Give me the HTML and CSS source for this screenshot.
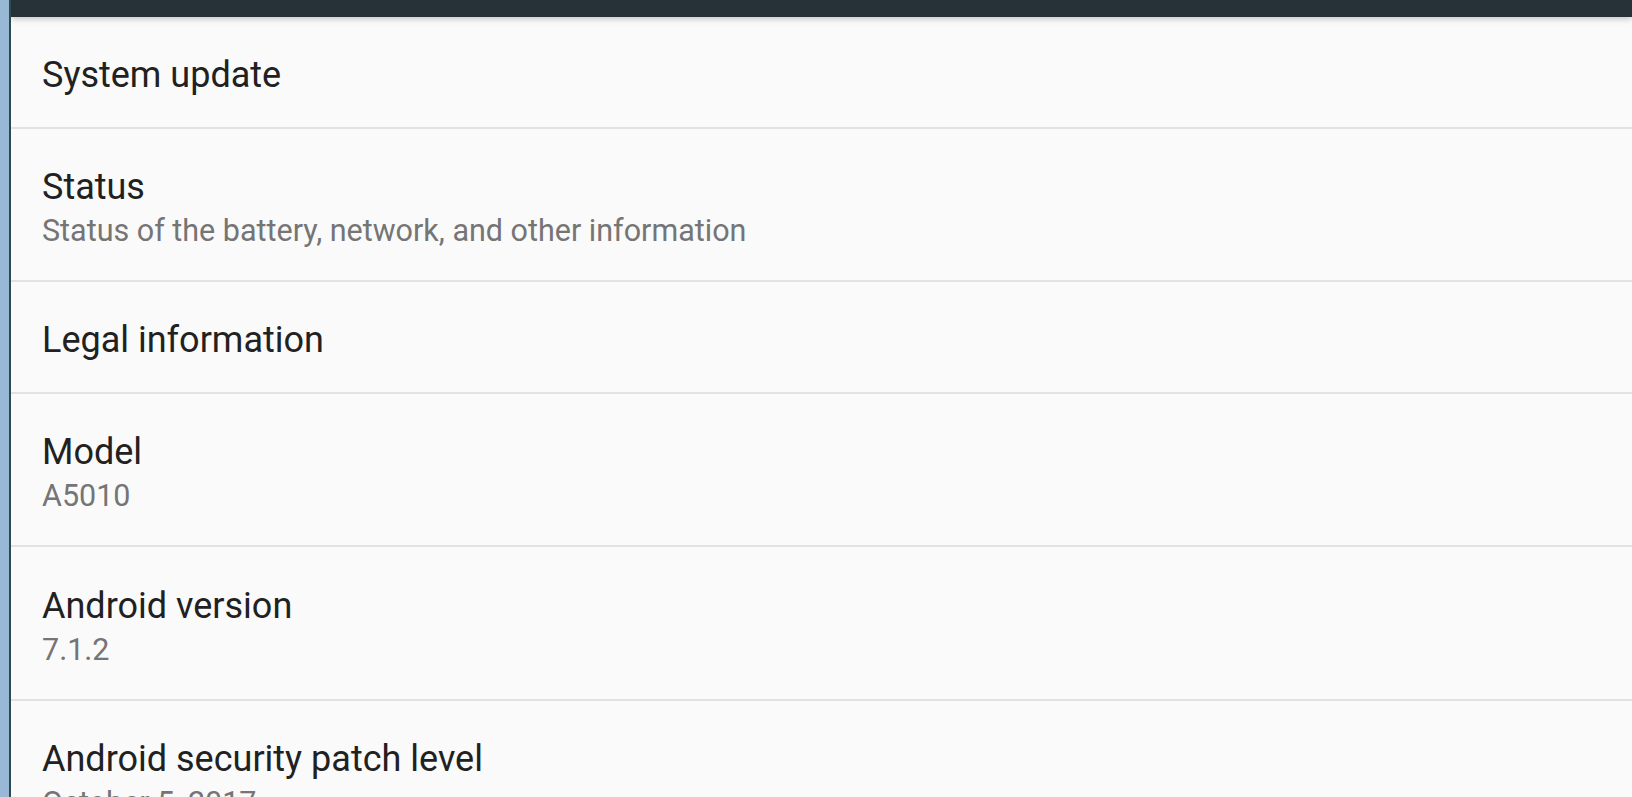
FILE: index.html
```html
<!DOCTYPE html>
<html lang="en">
<head>
<meta charset="utf-8">
<title>About phone</title>
<link rel="stylesheet" href="styles.css">
</head>
<body>
<div class="frame">
  <div class="edge"></div>
  <div class="screen">
    <div class="appbar"></div>
    <div class="list">
      <div class="pref single"><div class="title">System update</div></div>
      <div class="pref double"><div class="title">Status</div><div class="summary">Status of the battery, network, and other information</div></div>
      <div class="pref single"><div class="title">Legal information</div></div>
      <div class="pref double"><div class="title">Model</div><div class="summary">A5010</div></div>
      <div class="pref double tall"><div class="title">Android version</div><div class="summary">7.1.2</div></div>
      <div class="pref double"><div class="title">Android security patch level</div><div class="summary">October 5, 2017</div></div>
    </div>
  </div>
</div>
</body>
</html>
```

FILE: styles.css
```css
html, body {
  margin: 0;
  padding: 0;
  height: 100%;
  overflow: hidden;
}
body {
  font-family: Roboto, "Noto Sans", "Liberation Sans", sans-serif;
  background: #fafafa;
}
.frame {
  display: flex;
  height: 797px;
  overflow: hidden;
}
.edge {
  width: 9px;
  flex: none;
  background: #98b8d6;
  border-right: 2px solid #2b4b4c;
}
.screen {
  flex: 1;
  display: flex;
  flex-direction: column;
  background: #fafafa;
  min-width: 0;
  overflow: hidden;
}
.appbar {
  height: 17px;
  flex: none;
  background: #263238;
  position: relative;
  z-index: 1;
  box-shadow: 0 2px 6px rgba(0,0,0,0.22);
}
.list {
  display: flex;
  flex-direction: column;
}
.pref {
  display: flex;
  flex-direction: column;
  justify-content: center;
  box-sizing: border-box;
  padding-left: 31px;
  padding-top: 5px;
  border-bottom: 2px solid #e2e2e2;
  flex: none;
}
.pref.single { height: 112px; }
.pref.double { height: 153px; padding-top: 10px; }
.pref.double.tall { height: 154px; }
.title {
  font-size: 36px;
  line-height: 42px;
  color: #212121;
}
.summary {
  font-size: 30.5px;
  line-height: 45px;
  color: #757575;
}
```
